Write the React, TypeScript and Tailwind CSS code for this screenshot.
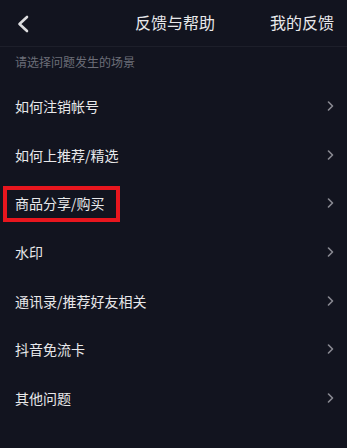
import React from "react";

const items = [
  "如何注销帐号",
  "如何上推荐/精选",
  "商品分享/购买",
  "水印",
  "通讯录/推荐好友相关",
  "抖音免流卡",
  "其他问题",
];

const font = { fontFamily: '"Noto Sans CJK SC", "Noto Sans", sans-serif' };

function ChevronRight() {
  return (
    <svg width="7" height="10" viewBox="0 0 7 10" fill="none" className="shrink-0">
      <path d="M1.5 1 L5.5 5 L1.5 9" stroke="#8a8b93" strokeWidth="1.6" strokeLinecap="round" strokeLinejoin="round" />
    </svg>
  );
}

export default function App() {
  return (
    <div className="w-[347px] h-[448px] overflow-hidden bg-[#12141f] text-[#e8e8ea]" style={font}>
      {/* header */}
      <div className="relative flex items-center h-[47px] border-b border-[#1d1f2a]">
        <div className="pl-[16px] pt-[2px]">
          <svg width="14" height="18" viewBox="0 0 14 18" fill="none">
            <path d="M11 2 L3.5 9 L11 16" stroke="#dcdcde" strokeWidth="2.6" strokeLinecap="round" strokeLinejoin="round" />
          </svg>
        </div>
        <div className="absolute left-[135px] top-[11px] text-[16px] leading-[22px]">反馈与帮助</div>
        <div className="ml-auto pr-[13px] text-[16px] leading-[22px] -mt-[2px]">我的反馈</div>
      </div>

      <div className="h-[35px] pl-[15px] pt-[7px] text-[12px] leading-[16px] text-[#6c6e78]">
        请选择问题发生的场景
      </div>

      <div className="flex flex-col">
        {items.map((item, i) => (
          <div key={item} className="flex items-center justify-between h-[48.6px] pl-[15px] pr-[13px]">
            <span className="relative text-[14px] leading-[20px]">
              {item}
              {i === 2 && (
                <span className="absolute -left-[12px] -right-[15px] -top-[7px] -bottom-[9px] border-4 border-[#e8161e]" />
              )}
            </span>
            <ChevronRight />
          </div>
        ))}
      </div>
    </div>
  );
}
